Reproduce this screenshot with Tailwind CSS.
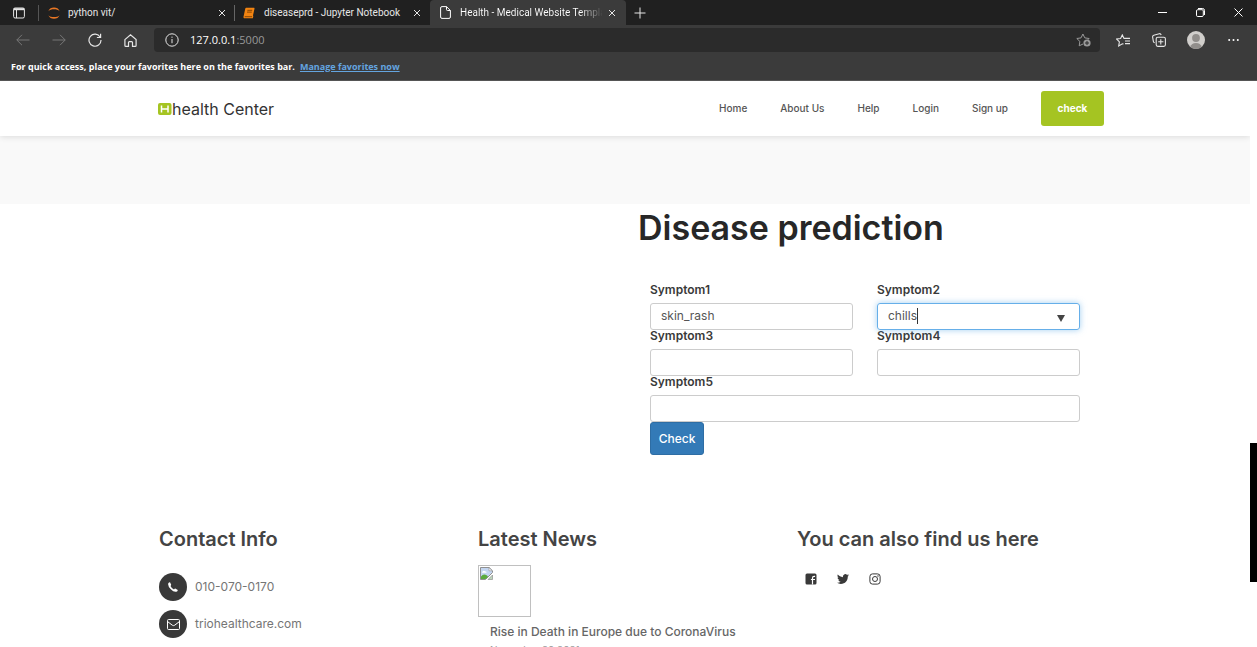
<!DOCTYPE html>
<html lang="en">
<head>
<meta charset="utf-8">
<title>Health - Medical Website Template</title>
<script src="https://cdn.jsdelivr.net/npm/@tailwindcss/browser@4"></script>
</head>
<body class="flex h-screen flex-col overflow-hidden bg-white font-['Inter',sans-serif]">

<!-- Browser chrome -->
<div class="shrink-0 border-b border-[#555] bg-[#3b3b3b] font-['Open_Sans',sans-serif] text-[#e6e6e6]">
  <div class="flex h-[25px] items-center bg-[#202020] font-['Roboto',sans-serif] text-[10px]">
    <button aria-label="Tab actions" class="flex w-[38px] justify-center">
      <svg class="h-3 w-3" viewBox="0 0 12 12" fill="none" stroke="currentColor"><rect x=".6" y="1" width="10.8" height="10" rx="1.5"/><path d="M.6 2.2h10.8" stroke-width="2"/><path d="M3.5 3v8"/></svg>
    </button>
    <div class="flex h-full w-[196px] items-center">
      <div class="h-4 w-px bg-[#555]"></div>
      <svg class="ml-[9px] h-3 w-3" viewBox="0 0 12 12" fill="#e87624"><path d="M.4 4.2C1.3 1.6 3.4.6 6 .6s4.700 1 5.600 3.600C10.300 2.800 8.300 2.200 6 2.200S1.700 2.800.4 4.200zM.4 8.200C1.300 10.700 3.400 11.700 6 11.700s4.700-1 5.600-3.500C10.300 9.600 8.300 10.100 6 10.100S1.700 9.600.4 8.200z"/></svg>
      <span class="ml-2 flex-1">python vit/</span>
      <button aria-label="Close tab" class="mr-2"><svg class="h-2 w-2" viewBox="0 0 8 8" stroke="currentColor"><path d="M1 1l6 6M7 1L1 7"/></svg></button>
    </div>
    <div class="flex h-full w-[196px] items-center">
      <div class="h-4 w-px bg-[#666]"></div>
      <svg class="ml-2 h-3 w-3" viewBox="0 0 12 12"><path d="M3.200.8h7.600c.5 0 .8.400.7.900L10 8.300l.3 1.100-.5 1.800H1.600C.7 11.200.3 10.500.5 9.700L2.300 1.600c.1-.5.400-.8.900-.8z" fill="#f28411"/><path d="M4.400 3.300h4.800M4 5.100h4.800M1.700 9.700h7.400" stroke="#6b3500" stroke-width=".8"/></svg>
      <span class="ml-[9px] flex-1 whitespace-nowrap">diseaseprd - Jupyter Notebook</span>
      <button aria-label="Close tab" class="mr-[9px]"><svg class="h-2 w-2" viewBox="0 0 8 8" stroke="currentColor"><path d="M1 1l6 6M7 1L1 7"/></svg></button>
    </div>
    <div class="flex h-full w-[196px] items-center rounded-t bg-[#3b3b3b]">
      <svg class="ml-[10px] h-[13px] w-[11px]" viewBox="0 0 11 13" fill="none" stroke="#fff"><path d="M.6 2Q.6.600 2 .600h4.500L10.400 4.500V11q0 1.400-1.400 1.400H2Q.6 12.400.6 11zM6.500.6v2.900q0 1 1 1h2.900"/></svg>
      <span class="ml-[9px] w-[142px] overflow-hidden bg-linear-to-r from-white from-85% to-[#444] bg-clip-text whitespace-nowrap text-transparent">Health - Medical Website Templa</span>
      <button aria-label="Close tab" class="ml-[6px]"><svg class="h-2 w-2" viewBox="0 0 8 8" stroke="currentColor"><path d="M1 1l6 6M7 1L1 7"/></svg></button>
    </div>
    <button aria-label="New tab" class="ml-2"><svg class="h-3 w-3" viewBox="0 0 12 12" stroke="currentColor"><path d="M6 .5v11M.5 6h11"/></svg></button>
    <div class="ml-auto flex items-center gap-[29px] pr-[14px]">
      <button aria-label="Minimize"><svg class="h-[9px] w-[9px]" viewBox="0 0 9 9" stroke="#fff"><path d="M0 4.500h9"/></svg></button>
      <button aria-label="Restore"><svg class="h-[9px] w-[9px]" viewBox="0 0 9 9" fill="none" stroke="#fff"><rect x=".5" y="1.700" width="6.800" height="6.800" rx="1.200"/><path d="M2 .5h4.500q2 0 2 2V7"/></svg></button>
      <button aria-label="Close window"><svg class="h-[9px] w-[9px]" viewBox="0 0 9 9" stroke="#fff"><path d="M.5.5l8 8M8.500.5l-8 8"/></svg></button>
    </div>
  </div>

  <div class="flex h-[30px] items-center">
    <div class="flex w-[154px] items-center gap-[22px] pl-4">
      <button aria-label="Back" class="text-[#777]"><svg class="h-3 w-[14px]" viewBox="0 0 14 12" fill="none" stroke="currentColor"><path d="M13.500 6H.8M6 .8L.8 6 6 11.200"/></svg></button>
      <button aria-label="Forward" class="text-[#777]"><svg class="h-3 w-[14px]" viewBox="0 0 14 12" fill="none" stroke="currentColor"><path d="M.5 6h12.700M8 .8L13.200 6 8 11.200"/></svg></button>
      <button aria-label="Refresh"><svg class="h-[14px] w-[14px]" viewBox="0 0 14 14" fill="none" stroke="currentColor" stroke-width="1.200"><path d="M12.200 4.200A6 6 0 1 0 13 7M12.600.8v3.700H8.900"/></svg></button>
      <button aria-label="Home"><svg class="h-[13px] w-[13px]" viewBox="0 0 13 13" fill="none" stroke="currentColor" stroke-width="1.200"><path d="M.9 5.600L6.500.8l5.600 4.800V11.400q0 .9-.9.9H8.500V8.600q0-.9-.9-.9H5.400q-.9 0-.9.900v3.700H1.800q-.9 0-.9-.9z"/></svg></button>
    </div>
    <div class="flex h-6 flex-1 items-center rounded bg-[#2b2b2b] pr-[9px] pl-[11px]">
      <svg class="h-[14px] w-[14px]" viewBox="0 0 14 14" fill="none" stroke="currentColor"><circle cx="7" cy="7" r="6.200"/><path d="M7 6v4.200M7 3.600v1.200"/></svg>
      <div class="ml-[11px] text-[11px] text-[#999]"><span class="text-white">127.0.0.1</span>:5000</div>
      <button aria-label="Add to favorites" class="ml-auto text-[#999]"><svg class="h-[14px] w-[15px]" viewBox="0 0 15 14" fill="none" stroke="currentColor"><path d="M7 11L3.200 12.800 3.900 8.500.8 5.500 5 4.900 6.900 1 8.800 4.900l4.300.6-1.100 1.200"/><circle cx="11" cy="10" r="3.600" fill="currentColor" stroke="none"/><path d="M11 8v4M9 10h4" stroke="#2b2b2b"/></svg></button>
    </div>
    <div class="flex w-[157px] items-center pl-4">
      <button aria-label="Favorites"><svg class="h-[13px] w-[14px]" viewBox="0 0 14 13" fill="none" stroke="currentColor" stroke-width="1.100"><path d="M7.500 10L6.400 9.800 2.700 11.900 3.400 7.900.6 5 4.600 4.500 6.300.9 8 4.400h6M9 7h5M9 9.600h5"/></svg></button>
      <button aria-label="Collections" class="ml-[22px]"><svg class="h-[14px] w-[14px]" viewBox="0 0 14 14" fill="none" stroke="currentColor" stroke-width="1.100"><rect x="4.200" y="4.200" width="9.200" height="9.200" rx="1.600"/><path d="M8.800 6.200v5.200M6.200 8.800h5.200M2.700 9.800Q1.700 9.500 1.400 8.600L.6 4Q.5 2.600 1.800 2.200L7.200.7Q8.700.5 9.200 2"/></svg></button>
      <button aria-label="Profile" class="ml-[21px]"><svg class="h-[18px] w-[18px]" viewBox="0 0 18 18"><circle cx="9" cy="9" r="9" fill="#d0cecb"/><circle cx="9" cy="7" r="3.900" fill="#918e8b"/><path d="M3.200 15.900Q4.500 12 9 12t5.800 3.900Q9 20 3.200 15.900z" fill="#918e8b"/></svg></button>
      <button aria-label="More" class="ml-[23px]"><svg class="h-1 w-[11px]" viewBox="0 0 11 4" fill="#fff"><circle cx="1.200" cy="2" r="1"/><circle cx="5.500" cy="2" r="1"/><circle cx="9.800" cy="2" r="1"/></svg></button>
    </div>
  </div>

  <div class="flex h-[25px] items-center gap-[5px] pb-[2px] pl-[11px] text-[9px] font-bold text-white">
    <span>For quick access, place your favorites here on the favorites bar.</span>
    <a href="#" class="text-[#64a5e0] underline">Manage favorites now</a>
  </div>
</div>

<!-- Page viewport -->
<div class="flex min-h-0 flex-1">
  <div class="min-w-0 flex-1 overflow-hidden">
    <header class="relative flex h-[55px] items-center justify-between bg-white pr-[146px] pl-[158px] shadow-[0_1px_6px_rgba(0,0,0,0.12)]">
      <a href="#" class="flex items-center text-[16px] leading-5 text-[#333]">
        <svg class="h-3 w-[14px]" viewBox="0 0 14 12"><rect width="13.500" height="12" rx="2" fill="#a5c422"/><path d="M3.500 2.500v7M10 2.500v7M3.500 6H10" fill="none" stroke="#fff" stroke-width="1.500"/></svg>health Center
      </a>
      <nav class="flex items-center gap-[33px] text-[10px] font-medium text-[#555]">
        <a href="#">Home</a>
        <a href="#">About Us</a>
        <a href="#">Help</a>
        <a href="#">Login</a>
        <a href="#">Sign up</a>
        <a href="#" class="flex h-[35px] w-[63px] items-center justify-center rounded-[3px] bg-[#a5c422] font-bold text-white">check</a>
      </nav>
    </header>
    <div class="h-[68px] bg-[#f9f9f9]"></div>

    <main class="pr-[170px] pl-[638px]">
      <h1 class="pt-1 text-[34px] leading-10 font-semibold text-[#272727]">Disease prediction</h1>
      <form class="mt-9 grid grid-cols-2 gap-x-6 pl-3 text-[12px] text-[#555]">
        <div>
          <label for="s1" class="block h-[19px] leading-3 font-semibold text-[#393939]">Symptom1</label>
          <input id="s1" value="skin_rash" class="block h-[27px] w-full rounded-[3px] border border-[#ccc] px-[10px] pb-[2px] outline-none">
        </div>
        <div class="relative">
          <label for="s2" class="block h-[19px] leading-3 font-semibold text-[#393939]">Symptom2</label>
          <input id="s2" value="chills" class="block h-[27px] w-full rounded-[3px] border border-[#66afe9] px-[10px] pb-[2px] shadow-[0_0_6px_rgba(102,175,233,0.6)] outline-none">
          <span class="absolute top-[24px] left-10 h-4 w-px bg-[#333]"></span>
          <svg class="absolute top-[31px] right-[15px] h-[7px] w-2" viewBox="0 0 8 7" fill="#444"><path d="M0 0h8L4 7z"/></svg>
        </div>
        <div>
          <label for="s3" class="block h-[19px] leading-3 font-semibold text-[#393939]">Symptom3</label>
          <input id="s3" class="block h-[27px] w-full rounded-[3px] border border-[#ccc] px-[10px] outline-none">
        </div>
        <div>
          <label for="s4" class="block h-[19px] leading-3 font-semibold text-[#393939]">Symptom4</label>
          <input id="s4" class="block h-[27px] w-full rounded-[3px] border border-[#ccc] px-[10px] outline-none">
        </div>
        <div class="col-span-2">
          <label for="s5" class="block h-[19px] leading-3 font-semibold text-[#393939]">Symptom5</label>
          <input id="s5" class="block h-[27px] w-full rounded-[3px] border border-[#ccc] px-[10px] outline-none">
        </div>
        <button type="button" class="h-[33px] w-[54px] rounded-[3px] border border-[#2e6da4] bg-[#337ab7] font-medium text-white">Check</button>
      </form>
    </main>

    <footer class="mt-[72px] grid grid-cols-3 pr-[134px] pl-[159px] text-[#444]">
      <section>
        <h2 class="text-[20px] leading-6 font-semibold">Contact Info</h2>
        <div class="mt-[22px] flex flex-col gap-[9px] text-[12px] text-[#757575]">
          <p class="flex items-center gap-2">
            <span class="flex h-7 w-7 items-center justify-center rounded-full bg-[#393939]"><svg class="h-[10px] w-[10px]" viewBox="0 0 10 10" fill="#fff"><path d="M.2 1.500Q.9.200 2 .2L3.200 2.700Q3.300 3.200 2.500 3.900 3.600 6.400 6 7.400 6.800 6.500 7.200 6.600L9.800 7.900Q9.600 9.300 8.400 9.700 5.800 10.300 2.800 7.300-.4 4.100.2 1.500z"/></svg></span>010-070-0170
          </p>
          <p class="flex items-center gap-2">
            <span class="flex h-7 w-7 items-center justify-center rounded-full bg-[#393939]"><svg class="h-[11px] w-[13px]" viewBox="0 0 13 11" fill="none" stroke="#fff"><rect x=".5" y=".5" width="12" height="10" rx="1"/><path d="M.5 2.500L5.300 6.200Q6.500 7 7.700 6.200L12.500 2.500"/></svg></span>triohealthcare.com
          </p>
        </div>
      </section>
      <section>
        <h2 class="text-[20px] leading-6 font-semibold">Latest News</h2>
        <div role="img" aria-label="Missing image" class="mt-[14px] h-[52px] w-[53px] border border-[#c0c0c0] p-px">
          <svg class="h-[13px] w-[13px]" viewBox="0 0 13 13"><path d="M.5.5h8.700l3.300 3.300v1.700L5.500 12.500h-5z" fill="#c3d5f0" stroke="#909090"/><path d="M1 12V9.500Q3.500 6 7 8.500l1 1.200L5.600 12z" fill="#5bab3d"/><path d="M2 5.500Q3 3 5 4.200q2 0 1.500 1.600H2z" fill="#fff"/><path d="M9 .7v3.100h3.300z" fill="#fff" stroke="#909090" stroke-width=".6"/><path d="M12.500 8v4.500H8z" fill="#bcd7bb" stroke="#909090" stroke-width=".7"/></svg>
        </div>
        <div class="pl-3">
          <h3 class="mt-2 text-[12px] leading-[14px] font-medium whitespace-nowrap text-[#666]">Rise in Death in Europe due to CoronaVirus</h3>
          <p class="mt-[5px] text-[10px] leading-3 text-[#999]">November 20 2021</p>
        </div>
      </section>
      <section>
        <h2 class="text-[20px] leading-6 font-semibold whitespace-nowrap">You can also find us here</h2>
        <div class="mt-[22px] flex gap-5 pl-2 text-[#393939]">
          <a href="#" aria-label="Facebook"><svg class="h-3 w-3" viewBox="0 0 12 12"><rect x=".5" y=".5" width="11" height="11" rx="1.500" fill="currentColor"/><path d="M7.500 11.500V4.900q0-1.600 1.600-1.600h1M5.900 6.500H10" fill="none" stroke="#fff" stroke-width="1.200"/></svg></a>
          <a href="#" aria-label="Twitter"><svg class="h-3 w-3" viewBox="0 0 24 24" fill="currentColor"><path d="M23.950 4.570a10 10 0 0 1-2.820.770 4.960 4.960 0 0 0 2.160-2.720c-.950.550-2 .960-3.130 1.180a4.920 4.920 0 0 0-8.380 4.480C7.690 8.090 4.070 6.130 1.640 3.160a4.820 4.820 0 0 0-.670 2.480c0 1.710.870 3.210 2.190 4.100a4.900 4.900 0 0 1-2.230-.620v.060a4.920 4.920 0 0 0 3.950 4.830 5 5 0 0 1-2.210.080 4.940 4.940 0 0 0 4.600 3.420A9.870 9.870 0 0 1 0 19.540a14 14 0 0 0 7.550 2.210c9.050 0 14-7.500 14-13.990v-.630a9.940 9.940 0 0 0 2.400-2.560z"/></svg></a>
          <a href="#" aria-label="Instagram"><svg class="h-3 w-3" viewBox="0 0 12 12" fill="none" stroke="currentColor"><rect x=".9" y=".9" width="10.200" height="10.200" rx="2.600"/><circle cx="6" cy="6" r="2.500"/><circle cx="9" cy="3" r=".3"/></svg></a>
        </div>
      </section>
    </footer>
  </div>

  <!-- Scrollbar track -->
  <div class="w-[7px] shrink-0 bg-white pt-[362px]"><div class="h-[139px] bg-black"></div></div>
</div>
</body>
</html>
